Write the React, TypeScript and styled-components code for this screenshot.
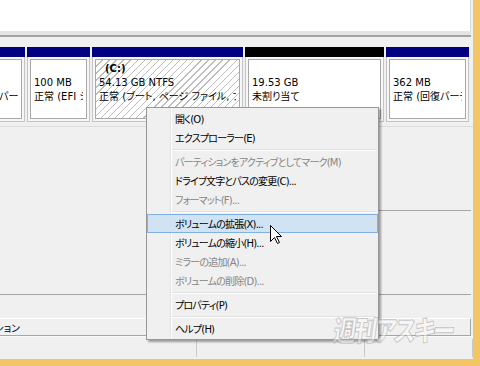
import React from 'react';
import styled, { createGlobalStyle, css } from 'styled-components';

const GlobalStyle = createGlobalStyle`
  html, body {
    margin: 0;
    padding: 0;
    background: #f2c665;
  }
  body {
    font-family: "DejaVu Sans", "Noto Sans CJK JP", sans-serif;
    font-size: 10px;
    font-feature-settings: "palt" 1;
    color: #000;
  }
`;

const Frame = styled.div`
  position: relative;
  width: 480px;
  height: 366px;
  overflow: hidden;
  background: #f2c665;
`;

const Window = styled.div`
  width: 473px;
  height: 359px;
  display: flex;
  flex-direction: column;
  background: #f0f0f0;
  overflow: hidden;
`;

const VolumeList = styled.div`
  height: 31px;
  margin-right: 2px;
  background: #fff;
  border-right: 1px solid #dadada;
`;

const Splitter = styled.div`
  height: 4px;
  margin-right: 2px;
  background: #e4e4e4;
  border-bottom: 2px solid #a3a3a3;
`;

const DiskArea = styled.div`
  padding-top: 10px;
  overflow: hidden;
  border-bottom: 1px solid #dcdcdc;
  padding-bottom: 4px;
`;

const PartitionRow = styled.div`
  display: flex;
  gap: 2px;
  margin-left: -55px;
`;

const Partition = styled.div<{ $w: number }>`
  flex: 0 0 ${p => p.$w}px;
  width: ${p => p.$w}px;
  display: flex;
  flex-direction: column;
`;

const PartHeader = styled.div<{ $tone: 'navy' | 'black' }>`
  height: 10px;
  background: ${p => (p.$tone === 'navy' ? '#000080' : '#000')};
`;

const PartBody = styled.div`
  height: 65px;
  box-sizing: border-box;
  padding: 2px;
  background: #f7f7f7;
  border: 1px solid #c4c4c4;
  border-top: none;
`;

const PartInner = styled.div<{ $hatched?: boolean }>`
  height: 100%;
  box-sizing: border-box;
  border: 1px solid #a8a8a8;
  padding: 2px 3px;
  overflow: hidden;
  white-space: nowrap;
  line-height: 14px;
  background: #fff;
  ${p =>
    p.$hatched &&
    css`
      background: repeating-linear-gradient(135deg, #fff 0 4px, #bcbcbc 4px 5px);
    `}
`;

const PartLine = styled.div<{ $bold?: boolean }>`
  height: 14px;
  overflow: hidden;
  text-overflow: clip;
  ${p =>
    p.$bold &&
    css`
      font-weight: bold;
      padding-left: 6px;
    `}
`;

const Middle = styled.div`
  flex: 1;
  display: flex;
  flex-direction: column;
  justify-content: space-between;
  padding-top: 83px;
`;

const Rule = styled.div<{ $from?: number }>`
  height: 1px;
  background: #a5a5a5;
  margin-left: ${p => p.$from || 0}px;
  margin-right: 2px;
`;

const Legend = styled.div`
  margin-top: 23px;
  margin-right: 2px;
  height: 16px;
  border-top: 1px solid #fff;
  border-right: 1px solid #a5a5a5;
  border-bottom: 1px solid #a5a5a5;
  overflow: hidden;
  display: flex;
  align-items: center;
  white-space: nowrap;
`;

const LegendText = styled.span`
  flex: 0 0 auto;
  margin-left: -88px;
`;

const StatusBar = styled.div`
  flex: 0 0 22px;
  display: flex;
  border-top: 1px solid #fafafa;
`;

const StatusPane = styled.div<{ $w?: number }>`
  ${p => (p.$w ? `flex: 0 0 ${p.$w}px;` : 'flex: 1;')}
  margin: 2px 0;
  border-right: 1px solid #c9c9c9;
`;

const Menu = styled.div`
  position: absolute;
  left: 146px;
  top: 107px;
  width: 233px;
  box-sizing: border-box;
  padding: 1px 0;
  border: 1px solid #979797;
  background: linear-gradient(to right, #f0f0f0 0 23px, #e2e3e3 23px 24px, #fff 24px 25px, #f0f0f0 25px);
  box-shadow: 2px 2px 2px rgba(0, 0, 0, 0.35);
`;

const MenuItem = styled.div<{ $disabled?: boolean; $active?: boolean }>`
  height: 19px;
  box-sizing: border-box;
  padding-left: 27px;
  display: flex;
  align-items: center;
  white-space: nowrap;
  letter-spacing: -0.8px;
  color: ${p => (p.$disabled ? '#858585' : '#000')};
  border: 1px solid transparent;
  ${p =>
    p.$active &&
    css`
      background: #d1e2f2;
      border-color: #7fb1e3;
    `}
`;

const MenuSep = styled.div`
  height: 1px;
  margin: 2px 2px 1px 25px;
  background: #e0e0e0;
  border-bottom: 1px solid #fff;
`;

const Cursor = styled.svg`
  position: absolute;
  left: 270px;
  top: 225px;
`;

const Watermark = styled.div`
  position: absolute;
  left: 337px;
  top: 309px;
  font-family: "Noto Sans CJK JP", sans-serif;
  font-size: 28px;
  font-weight: 900;
  letter-spacing: -2px;
  color: rgba(255, 255, 255, 0.45);
  -webkit-text-stroke: 1px rgba(140, 140, 140, 0.45);
  transform: skewX(-8deg) scaleX(0.8);
  transform-origin: left top;
  white-space: nowrap;
  pointer-events: none;
`;

type Part = {
  w: number;
  tone: 'navy' | 'black';
  name?: string;
  size: string;
  status: string;
  hatched?: boolean;
};

const parts: Part[] = [
  { w: 80, tone: 'navy', size: '300 MB', status: '正常 (回復パーティション)' },
  { w: 63, tone: 'navy', size: '100 MB', status: '正常 (EFI システム パーティション)' },
  { w: 151, tone: 'navy', name: '(C:)', size: '54.13 GB NTFS', status: '正常 (ブート, ページ ファイル, プライマリ パーティション)', hatched: true },
  { w: 139, tone: 'black', size: '19.53 GB', status: '未割り当て' },
  { w: 83, tone: 'navy', size: '362 MB', status: '正常 (回復パーティション)' },
];

type Item = { label?: string; disabled?: boolean; active?: boolean; sep?: boolean };

const items: Item[] = [
  { label: '開く(O)' },
  { label: 'エクスプローラー(E)' },
  { sep: true },
  { label: 'パーティションをアクティブとしてマーク(M)', disabled: true },
  { label: 'ドライブ文字とパスの変更(C)...' },
  { label: 'フォーマット(F)...', disabled: true },
  { sep: true },
  { label: 'ボリュームの拡張(X)...', active: true },
  { label: 'ボリュームの縮小(H)...' },
  { label: 'ミラーの追加(A)...', disabled: true },
  { label: 'ボリュームの削除(D)...', disabled: true },
  { sep: true },
  { label: 'プロパティ(P)' },
  { sep: true },
  { label: 'ヘルプ(H)' },
];

const App: React.FC = () => {
  return (
    <Frame>
      <GlobalStyle />
      <Window>
        <VolumeList />
        <Splitter />
        <DiskArea>
          <PartitionRow>
            {parts.map((p, i) => (
              <Partition key={i} $w={p.w}>
                <PartHeader $tone={p.tone} />
                <PartBody>
                  <PartInner $hatched={p.hatched}>
                    {p.name ? <PartLine $bold>{p.name}</PartLine> : <PartLine>&nbsp;</PartLine>}
                    <PartLine>{p.size}</PartLine>
                    <PartLine>{p.status}</PartLine>
                  </PartInner>
                </PartBody>
              </Partition>
            ))}
          </PartitionRow>
        </DiskArea>
        <Middle>
          <Rule $from={378} />
          <div>
            <Rule />
            <Legend>
              <LegendText>プライマリ パーティション</LegendText>
            </Legend>
          </div>
        </Middle>
        <StatusBar>
          <StatusPane $w={196} />
          <StatusPane $w={167} />
          <StatusPane />
        </StatusBar>
      </Window>

      <Menu>
        {items.map((it, i) =>
          it.sep ? (
            <MenuSep key={i} />
          ) : (
            <MenuItem key={i} $disabled={it.disabled} $active={it.active}>
              {it.label}
            </MenuItem>
          )
        )}
      </Menu>

      <Cursor width="13" height="20" viewBox="0 0 13 20">
        <path
          d="M0.5 0.5 L0.5 16.5 L4.5 12.5 L7.5 18.5 L9.5 17.5 L6.5 11.5 L11.5 11.5 Z"
          fill="#fff"
          stroke="#000"
          strokeWidth="1"
        />
      </Cursor>

      <Watermark>週刊アスキー</Watermark>
    </Frame>
  );
};

export default App;
